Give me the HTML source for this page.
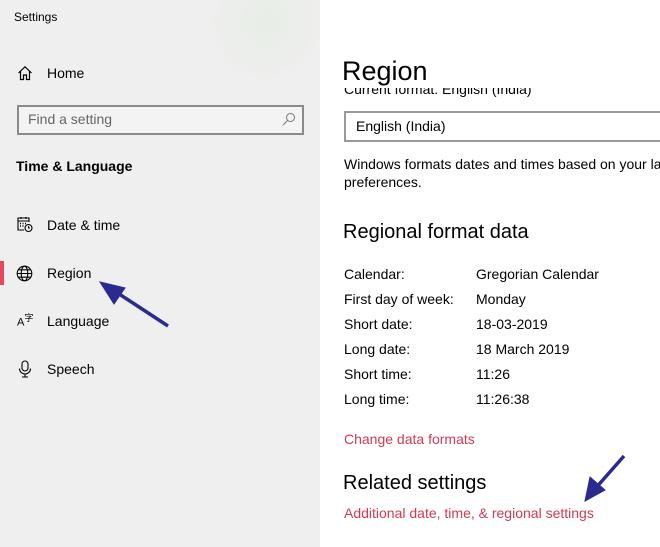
<!DOCTYPE html>
<html><head><style>
*{margin:0;padding:0;box-sizing:border-box}
body{width:660px;height:547px;overflow:hidden;font-family:"Liberation Sans",sans-serif;color:#000;position:relative;background:#fff}
#left{position:absolute;left:0;top:0;width:320px;height:547px;background:#efefef}
.t{position:absolute;white-space:nowrap;line-height:1}
.s{font-size:14px}
.red{color:#d13a52}
</style></head><body>
<div id="left">
<div style="position:absolute;left:200px;top:0;width:120px;height:90px;background:radial-gradient(ellipse at 55% 25%,#e8ede6 0%,#efefef 70%)"></div>
</div>
<div class="t" style="left:14px;top:11px;font-size:12px">Settings</div>
<svg style="position:absolute;left:17px;top:65px" width="16" height="16" viewBox="0 0 16 16" fill="none" stroke="#000" stroke-width="1.2"><path d="M1.5 8L8 1.8L14.5 8M3.5 6.3V14.5H6.5V10H9.5V14.5H12.5V6.3"/></svg>
<div class="t s" style="left:47px;top:66px;font-size:14px">Home</div>
<div style="position:absolute;left:17px;top:105px;width:287px;height:30px;border:2px solid #8a8a8a;background:#f3f3f3"></div>
<div class="t" style="left:28px;top:112px;font-size:14px;color:#666">Find a setting</div>
<svg style="position:absolute;left:282px;top:112px" width="14" height="14" viewBox="0 0 14 14" fill="none" stroke="#777" stroke-width="1"><circle cx="8.5" cy="5.5" r="4"/><path d="M5.5 8.5L1 13"/></svg>
<div class="t" style="left:16px;top:159px;font-size:14px;font-weight:bold">Time &amp; Language</div>
<svg style="position:absolute;left:17px;top:216px" width="16" height="17" viewBox="0 0 16 17" fill="none" stroke="#000" stroke-width="1.1"><path d="M12 6V2H1V14H7"/><path d="M1 5H12M4 1V3M9 1V3"/><circle cx="11.5" cy="12" r="3.5"/><path d="M11.5 10V12H13"/><path d="M3 7.5h1M5.5 7.5h1M8 7.5h1M3 10h1M5.5 10h1" stroke-width="1.5"/></svg>
<div class="t" style="left:47px;top:218px;font-size:14px">Date &amp; time</div>
<div style="position:absolute;left:0;top:261px;width:4px;height:24px;background:#e8485c"></div>
<svg style="position:absolute;left:16px;top:265px" width="17" height="17" viewBox="0 0 17 17" fill="none" stroke="#000" stroke-width="1.1"><circle cx="8.5" cy="8.5" r="7.3"/><ellipse cx="8.5" cy="8.5" rx="3.3" ry="7.3"/><path d="M1.2 8.5H15.8M2.5 4.8H14.5M2.5 12.2H14.5"/></svg>
<div class="t" style="left:47px;top:266px;font-size:14px">Region</div>
<div class="t" style="left:17px;top:313px;font-size:11px">A<sup style="font-size:9px;font-family:'Noto Sans CJK SC',sans-serif">字</sup></div>
<div class="t" style="left:47px;top:314px;font-size:14px">Language</div>
<svg style="position:absolute;left:18px;top:360px" width="14" height="18" viewBox="0 0 14 18" fill="none" stroke="#000" stroke-width="1.1"><rect x="4" y="1" width="6" height="10" rx="3"/><path d="M1.5 8.5A5.5 5.5 0 0 0 12.5 8.5M7 14V17M4 17H10"/></svg>
<div class="t" style="left:47px;top:362px;font-size:14px">Speech</div>

<div style="position:absolute;left:320px;top:0;width:340px;height:547px;overflow:hidden">
<div class="t" style="left:22px;top:58px;font-size:27px">Region</div>
<div style="position:absolute;left:24px;top:88px;width:316px;height:12px;overflow:hidden"><div class="t s" style="left:0;top:-6px">Current format: English (India)</div></div>
<div style="position:absolute;left:24px;top:111px;width:330px;height:31px;border:2px solid #999;background:#fff"></div>
<div class="t" style="left:36px;top:119px;font-size:14px">English (India)</div>
<div class="t s" style="left:24px;top:157px">Windows formats dates and times based on your language</div>
<div class="t s" style="left:24px;top:175px">preferences.</div>
<div class="t" style="left:23px;top:222px;font-size:20px">Regional format data</div>
<div class="t s" style="left:24px;top:267px">Calendar:</div><div class="t s" style="left:156px;top:267px">Gregorian Calendar</div>
<div class="t s" style="left:24px;top:292px">First day of week:</div><div class="t s" style="left:156px;top:292px">Monday</div>
<div class="t s" style="left:24px;top:317px">Short date:</div><div class="t s" style="left:156px;top:317px">18-03-2019</div>
<div class="t s" style="left:24px;top:342px">Long date:</div><div class="t s" style="left:156px;top:342px">18 March 2019</div>
<div class="t s" style="left:24px;top:367px">Short time:</div><div class="t s" style="left:156px;top:367px">11:26</div>
<div class="t s" style="left:24px;top:392px">Long time:</div><div class="t s" style="left:156px;top:392px">11:26:38</div>
<div class="t s red" style="left:24px;top:432px">Change data formats</div>
<div class="t" style="left:23px;top:473px;font-size:20px">Related settings</div>
<div class="t s red" style="left:24px;top:506px">Additional date, time, &amp; regional settings</div>
</div>

<svg style="position:absolute;left:0;top:0" width="660" height="547">
<g stroke="#2b2a8e" fill="#2b2a8e">
<line x1="168" y1="326" x2="110" y2="288" stroke-width="3.5"/>
<polygon points="100,282 125,288 114,304"/>
<line x1="624" y1="456" x2="594" y2="490" stroke-width="3.5"/>
<polygon points="585,501 590,477 605,490"/>
</g></svg>
</body></html>
